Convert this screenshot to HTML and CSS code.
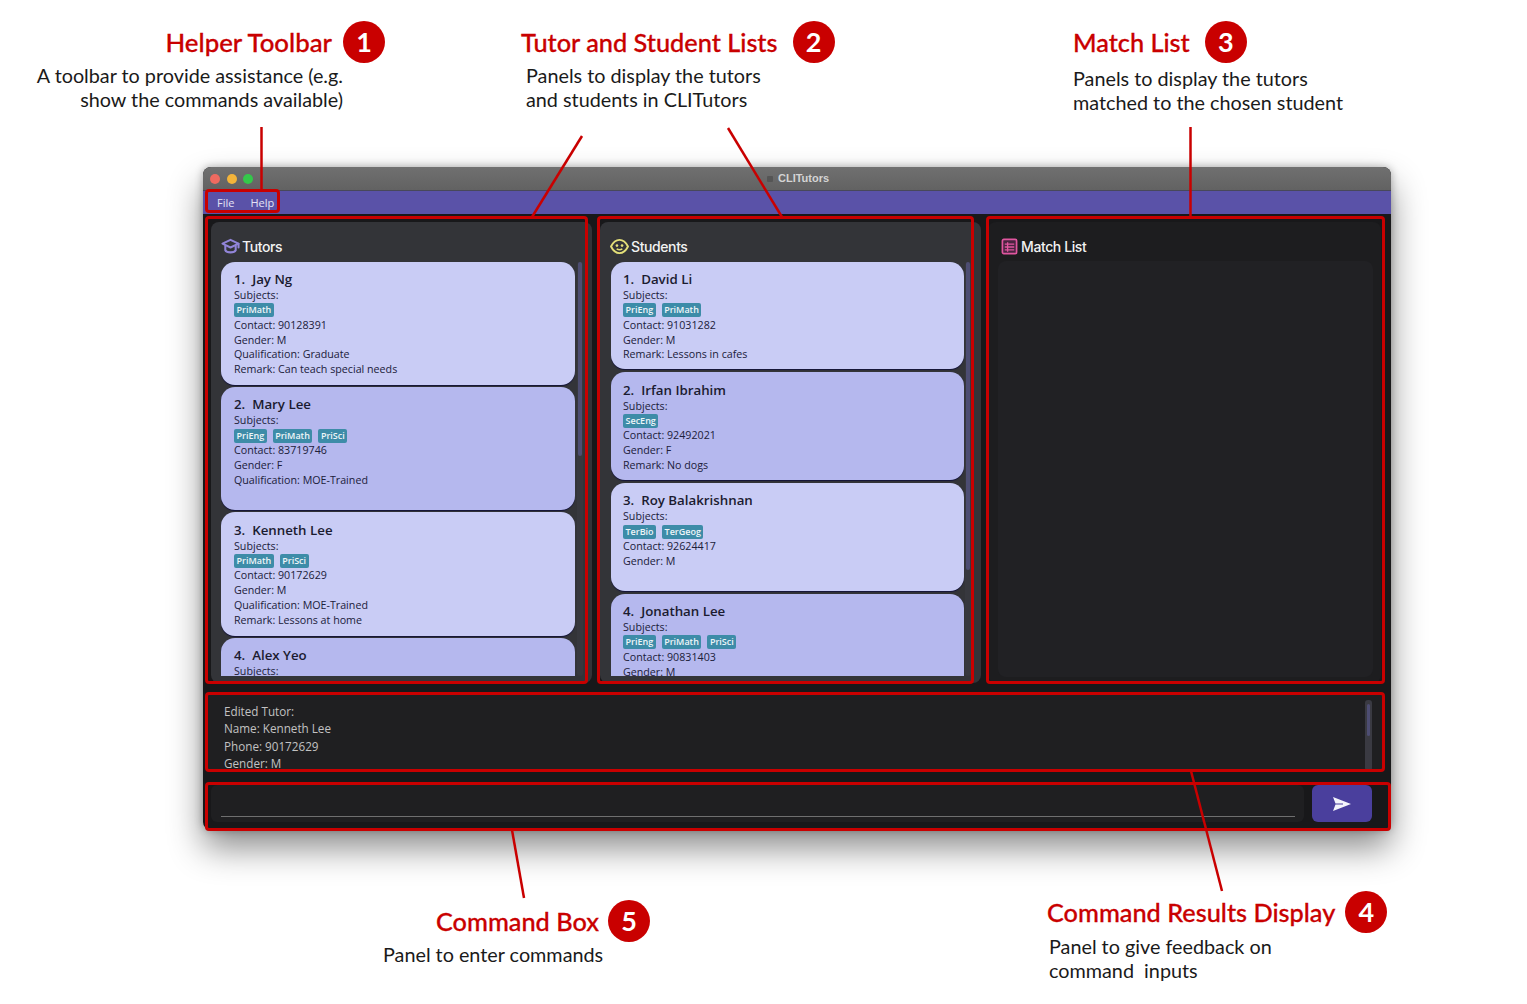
FILE: index.html
```html
<!DOCTYPE html>
<html lang="en">
<head>
  <meta charset="UTF-8" />
  <title>CLITutors - UI overview</title>
  <link rel="stylesheet" href="styles.css">
</head>
<body>

  <!-- callouts around the window -->
  <div class="callout callout-toolbar">
    <div class="callout-head"><span class="callout-title">Helper Toolbar</span><span class="num">1</span></div>
    <p>A toolbar to provide assistance (e.g.<br>show the commands available)</p>
  </div>
  <div class="callout callout-lists">
    <div class="callout-head"><span class="callout-title">Tutor and Student Lists</span><span class="num">2</span></div>
    <p>Panels to display the tutors<br>and students in CLITutors</p>
  </div>
  <div class="callout callout-match">
    <div class="callout-head"><span class="callout-title">Match List</span><span class="num">3</span></div>
    <p>Panels to display the tutors<br>matched to the chosen student</p>
  </div>
  <div class="callout callout-results">
    <div class="callout-head"><span class="callout-title">Command Results Display</span><span class="num">4</span></div>
    <p>Panel to give feedback on<br>command&nbsp; inputs</p>
  </div>
  <div class="callout callout-box">
    <div class="callout-head"><span class="callout-title">Command Box</span><span class="num">5</span></div>
    <p>Panel to enter commands</p>
  </div>

  <div class="window">
    <div class="titlebar">
      <span class="dot dot-red"></span><span class="dot dot-yellow"></span><span class="dot dot-green"></span>
      <span class="window-title"><span class="title-icon"></span>CLITutors</span>
    </div>
    <div class="menubar"><span>File</span><span>Help</span></div>

    <div class="panels">
      <section class="panel">
        <h2 class="panel-title">
          <svg class="panel-icon" viewBox="0 0 20 18" fill="none" stroke="#9184d8" stroke-width="2.200" stroke-linejoin="round" stroke-linecap="round">
            <path d="M10 2 1.500 6 10 10l8.500-4z"/><path d="M4.500 8.500v4.500c1.500 3 9.500 3 11 0V8.500"/><path d="M18.500 6v4"/>
          </svg>Tutors</h2>
        <div class="list tutor-list">
          <div class="card">
            <div class="name">1.&nbsp; Jay Ng</div>
            <div>Subjects:</div>
            <div class="tags"><span>PriMath</span></div>
            <div>Contact: 90128391</div>
            <div>Gender: M</div>
            <div>Qualification: Graduate</div>
            <div>Remark: Can teach special needs</div>
          </div>
          <div class="card alt">
            <div class="name">2.&nbsp; Mary Lee</div>
            <div>Subjects:</div>
            <div class="tags"><span>PriEng</span><span>PriMath</span><span>PriSci</span></div>
            <div>Contact: 83719746</div>
            <div>Gender: F</div>
            <div>Qualification: MOE-Trained</div>
          </div>
          <div class="card">
            <div class="name">3.&nbsp; Kenneth Lee</div>
            <div>Subjects:</div>
            <div class="tags"><span>PriMath</span><span>PriSci</span></div>
            <div>Contact: 90172629</div>
            <div>Gender: M</div>
            <div>Qualification: MOE-Trained</div>
            <div>Remark: Lessons at home</div>
          </div>
          <div class="card alt">
            <div class="name">4.&nbsp; Alex Yeo</div>
            <div>Subjects:</div>
          </div>
        </div>
        <div class="scrollbar"><div class="thumb thumb-tutors"></div></div>
      </section>

      <section class="panel panel-students">
        <h2 class="panel-title">
          <svg class="panel-icon" viewBox="0 0 20 18" fill="none" stroke="#e3df78" stroke-width="2">
            <path d="M1 9C3.500 4 6.500 2 10 2s6.500 2 9 7c-2.500 5-5.500 7-9 7s-6.500-2-9-7z"/>
            <circle cx="7.300" cy="8" r="1.400" fill="#e3df78" stroke="none"/><circle cx="12.700" cy="8" r="1.400" fill="#e3df78" stroke="none"/>
            <path d="M7 11.500c2 1.300 4 1.300 6 0" stroke-width="1.500"/>
          </svg>Students</h2>
        <div class="list student-list">
          <div class="card">
            <div class="name">1.&nbsp; David Li</div>
            <div>Subjects:</div>
            <div class="tags"><span>PriEng</span><span>PriMath</span></div>
            <div>Contact: 91031282</div>
            <div>Gender: M</div>
            <div>Remark: Lessons in cafes</div>
          </div>
          <div class="card alt">
            <div class="name">2.&nbsp; Irfan Ibrahim</div>
            <div>Subjects:</div>
            <div class="tags"><span>SecEng</span></div>
            <div>Contact: 92492021</div>
            <div>Gender: F</div>
            <div>Remark: No dogs</div>
          </div>
          <div class="card">
            <div class="name">3.&nbsp; Roy Balakrishnan</div>
            <div>Subjects:</div>
            <div class="tags"><span>TerBio</span><span>TerGeog</span></div>
            <div>Contact: 92624417</div>
            <div>Gender: M</div>
          </div>
          <div class="card alt">
            <div class="name">4.&nbsp; Jonathan Lee</div>
            <div>Subjects:</div>
            <div class="tags"><span>PriEng</span><span>PriMath</span><span>PriSci</span></div>
            <div>Contact: 90831403</div>
            <div>Gender: M</div>
          </div>
        </div>
        <div class="scrollbar"><div class="thumb thumb-students"></div></div>
      </section>

      <section class="panel panel-match">
        <h2 class="panel-title">
          <svg class="panel-icon" viewBox="0 0 18 18" fill="none" stroke="#e0569f" stroke-width="1.800">
            <rect x="1.500" y="1.500" width="15" height="15" rx="1.500" fill="#4a2440"/>
            <path d="M4 6.500h10M4 9.500h10M4 12.500h10M7 4.500v10" stroke-width="1.400"/>
          </svg>Match List</h2>
        <div class="match-body"></div>
      </section>
    </div>

    <div class="results">
      <div class="results-text">
        <div>Edited Tutor:</div>
        <div>Name: Kenneth Lee</div>
        <div>Phone: 90172629</div>
        <div>Gender: M</div>
      </div>
      <div class="scrollbar results-scroll"><div class="thumb thumb-results"></div></div>
    </div>

    <div class="command">
      <div class="command-input"><div class="command-line"></div></div>
      <div class="send">
        <svg viewBox="0 0 18 14" width="18" height="14"><path d="M0 0 18 7 0 14 2.500 7.500h7.500v-1H2.500z" fill="#f4f4fb"/></svg>
      </div>
    </div>
  </div>

  <!-- red highlight boxes and leader lines sit on top of the screenshot -->
  <div class="hl hl-toolbar"></div>
  <div class="hl hl-tutors"></div>
  <div class="hl hl-students"></div>
  <div class="hl hl-match"></div>
  <div class="hl hl-results"></div>
  <div class="hl hl-command"></div>
  <svg class="leaders" width="1527" height="1004" stroke="#c90000" stroke-width="2.500">
    <path d="M261.500 127V190"/>
    <path d="M582 136 532 217"/>
    <path d="M728 128 782 217"/>
    <path d="M1190.500 127V217"/>
    <path d="M1191 771 1222 891"/>
    <path d="M512 830 524 898"/>
  </svg>

</body>
</html>
```

FILE: styles.css
```css
html, body {
  margin: 0;
  height: 1004px;
  overflow: hidden;
}
body {
  position: relative;
  background: #fff;
  font-family: "Open Sans", sans-serif;
  padding: 167px 0 0 203px;
  box-sizing: border-box;
}

/* callouts */
.callout {
  position: absolute;
  font-family: Lato, sans-serif;
  color: #1a1a1a;
}
.callout p {
  margin: 0;
  font-size: 19.800px;
  line-height: 24px;
  white-space: nowrap;
}
.callout-head {
  display: flex;
  align-items: center;
  height: 42px;
}
.callout-title {
  color: #c90000;
  font-size: 25.300px;
  font-weight: 500;
  -webkit-text-stroke: 0.3px #c90000;
}
.num {
  width: 42px;
  height: 42px;
  border-radius: 50%;
  background: #c90000;
  color: #fff;
  font-size: 27px;
  font-weight: 700;
  line-height: 42px;
  text-align: center;
}
.callout-toolbar { left: 0; top: 21px; width: 385px; }
.callout-toolbar .callout-head { justify-content: flex-end; }
.callout-toolbar .callout-title { font-size: 25.800px; }
.callout-toolbar .num { margin-left: 11px; }
.callout-toolbar p { text-align: right; margin-right: 42px; }
.callout-lists { left: 521px; top: 21px; }
.callout-lists .num { margin-left: 15px; }
.callout-lists p { margin-left: 5px; }
.callout-match { left: 1073px; top: 21px; }
.callout-match .num { margin-left: 15px; }
.callout-match p { margin-top: 3px; }
.callout-results { left: 1047px; top: 891px; }
.callout-results .num { margin-left: 10px; }
.callout-results p { margin: 1px 0 0 2px; }
.callout-box { left: 383px; top: 900px; width: 267px; }
.callout-box .callout-head { justify-content: flex-end; }
.callout-box .num { margin-left: 9px; }

/* app window */
.window {
  width: 1188px;
  height: 663px;
  border-radius: 8px;
  background: #18181a;
  overflow: hidden;
  box-shadow: 0 18px 34px rgba(0,0,0,0.45), 0 0 8px rgba(0,0,0,0.3);
  display: flex;
  flex-direction: column;
}
.titlebar {
  height: 24px;
  flex: none;
  box-sizing: border-box;
  border-bottom: 1px solid #48485a;
  background: linear-gradient(#707070, #626262);
  display: flex;
  align-items: center;
  gap: 6.500px;
  padding-left: 7px;
  position: relative;
}
.dot {
  width: 10px;
  height: 10px;
  border-radius: 50%;
}
.dot-red { background: #ee6a60; }
.dot-yellow { background: #f3b43a; }
.dot-green { background: #34c84a; }
.window-title {
  position: absolute;
  left: 575px;
  top: 5px;
  font-size: 11px;
  line-height: 13px;
  font-weight: 700;
  color: #d4d4d4;
  font-family: "Liberation Sans", sans-serif;
}
.title-icon {
  position: absolute;
  left: -11px;
  top: 4px;
  width: 6px;
  height: 6px;
  border-radius: 1px;
  background: #555;
}
.menubar {
  height: 23px;
  flex: none;
  background: #5a52a8;
  color: #e4e3f5;
  font-size: 11px;
  display: flex;
  align-items: center;
  gap: 16px;
  padding-left: 14px;
}
.panels {
  display: flex;
  gap: 8px;
  padding: 8px 7px 0 8px;
  height: 461px;
  flex: none;
}
.panel {
  width: 381px;
  background: #333438;
  border-radius: 8px;
  position: relative;
  box-sizing: border-box;
  padding: 0 10px;
}
.panel-students .list {
  margin-left: 0.500px;
  width: 353.500px;
}
.panel-students .card { padding-left: 12.500px; }
.panel-students .scrollbar { right: 10px; }
.panel-match {
  width: 393px;
  margin-left: -1px;
  background: #1d1d1f;
}
.panel-title {
  display: flex;
  align-items: center;
  height: 39px;
  margin: 0;
  padding-top: 9px;
  box-sizing: border-box;
  font-family: Inter, sans-serif;
  font-size: 14px;
  font-weight: 500;
  letter-spacing: -0.4px;
  color: #f2f2f2;
}
.panel-match .panel-title { padding-left: 2px; }
.panel-icon {
  width: 19px;
  height: 17px;
  margin-right: 2px;
  flex: none;
}
.list {
  width: 354px;
  height: 415px;
  overflow: hidden;
  display: flex;
  flex-direction: column;
  padding-top: 0.500px;
  box-sizing: border-box;
}
.tutor-list { gap: 2px; }
.student-list { gap: 3px; }
.card {
  flex: none;
  box-sizing: border-box;
  background: #c9ccf5;
  border-radius: 14px;
  padding: 9.500px 13px 0;
  font-size: 10.700px;
  line-height: 14.850px;
  color: #20203a;
  box-shadow: 0 1px 1px #14143a;
}
.tutor-list .card { height: 123.400px; }
.student-list .card { height: 107.700px; }
.card.alt { background: #b5b8ee; }
.name {
  font-size: 13.300px;
  font-weight: 600;
  line-height: 17px;
  color: #1b1b30;
}
.tags {
  display: flex;
  gap: 6px;
  height: 14.850px;
  align-items: center;
}
.tags span {
  background: #3d8ca8;
  color: #eef6f8;
  font-size: 9px;
  font-weight: 600;
  line-height: 14px;
  padding: 0 2.500px;
  border-radius: 2px;
}
.scrollbar {
  position: absolute;
  right: 9px;
  top: 40px;
  bottom: 7px;
  width: 6px;
  background: #37383e;
  border-radius: 3px;
}
.thumb {
  background: #4d4d72;
  border-radius: 2px;
  margin: 0 1px;
}
.thumb-tutors { height: 194px; }
.thumb-students { height: 308px; }
.match-body {
  height: 416px;
  width: 375px;
  background: #212124;
  border-radius: 8px;
}
.results {
  height: 77px;
  flex: none;
  margin: 11px 7px 0 4px;
  background: #1f1f21;
  border-radius: 4px;
  overflow: hidden;
  position: relative;
}
.results-text {
  padding: 9px 0 0 17px;
  font-size: 11.700px;
  line-height: 17.300px;
  color: #c2c2c2;
}
.results-scroll {
  top: 6px;
  bottom: 0;
  right: 12px;
  width: 7px;
  background: #3a3a42;
}
.thumb-results {
  height: 32px;
  margin: 4px 2px 0;
}
.command {
  display: flex;
  gap: 8px;
  flex: none;
  margin: 14px 0 0 8px;
  height: 37px;
}
.command-input {
  width: 1093px;
  background: #1f1f21;
  border-radius: 6px;
  padding: 0 9px 0 10px;
  box-sizing: border-box;
}
.command-line {
  height: 1px;
  margin-top: 31px;
  background: #6f6f6f;
}
.send {
  width: 60px;
  background: #4a3f9d;
  border-radius: 6px;
  display: flex;
  align-items: center;
  justify-content: center;
}

/* red annotation overlays */
.hl {
  position: absolute;
  box-sizing: border-box;
  border: 3px solid #c90000;
  border-radius: 4px;
}
.hl-toolbar { left: 205px; top: 189px; width: 75px; height: 24px; }
.hl-tutors { left: 205px; top: 216px; width: 383px; height: 468px; }
.hl-students { left: 597px; top: 216px; width: 377px; height: 468px; }
.hl-match { left: 986px; top: 216px; width: 399px; height: 468px; }
.hl-results { left: 205px; top: 692px; width: 1180px; height: 80px; }
.hl-command { left: 205px; top: 782px; width: 1186px; height: 49px; }
.leaders {
  position: absolute;
  left: 0;
  top: 0;
}
```
